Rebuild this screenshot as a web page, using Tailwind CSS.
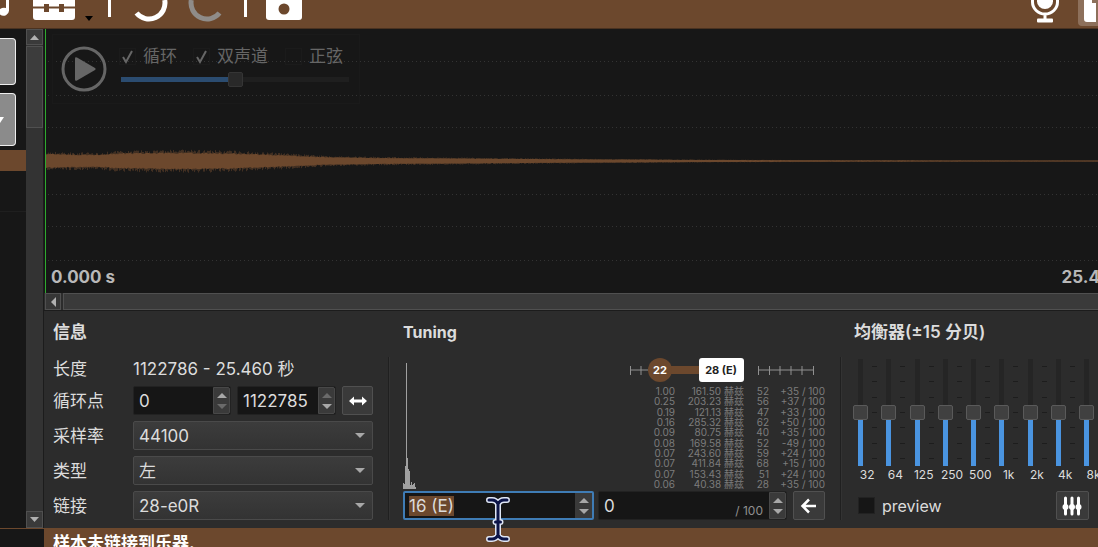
<!DOCTYPE html>
<html lang="zh-CN">
<head>
<meta charset="utf-8">
<title>样本编辑器</title>
<meta name="viewport" content="width=device-width, initial-scale=1">
<script src="https://cdn.jsdelivr.net/npm/@tailwindcss/browser@4"></script>
</head>
<body class="flex h-screen flex-col overflow-hidden bg-[#171717] font-['Inter','Noto_Sans_CJK_SC',sans-serif] text-[17px] leading-5 text-[#dcdcdc]">

<header class="flex h-[29px] shrink-0 items-start border-b border-[#4a3220] bg-[#6c482d] text-white">
  <button type="button" aria-label="乐器"><svg class="block" width="9" height="28" viewBox="0 0 9 28"><path d="M6 0h3v10a5.500 5.500 0 0 1-9 4.500V9q3-2 6-1z" fill="currentColor"/></svg></button>
  <button type="button" aria-label="工具箱" class="ml-6"><svg class="block" width="42" height="28" viewBox="0 0 42 28"><path d="M0 0h42v6.500H31V4h-5v2.500H16V4h-5v2.500H0zM0 8.500h11V12h5V8.500h10V12h5V8.500h11V17a3 3 0 0 1-3 3H3a3 3 0 0 1-3-3z" fill="currentColor"/></svg></button>
  <button type="button" aria-label="更多工具" class="ml-[9px] text-black"><svg class="block" width="10" height="28" viewBox="0 0 10 28"><path d="M1 16h8l-4 5z" fill="currentColor"/></svg></button>
  <div class="ml-[14px] h-[17px] w-[3px] bg-white"></div>
  <button type="button" aria-label="撤销" class="ml-[22px]"><svg class="block" width="36" height="28" viewBox="0 0 36 28"><path d="M3.500 13A16 16 0 0 0 31.700 0" fill="none" stroke="currentColor" stroke-width="5"/></svg></button>
  <button type="button" aria-label="重做" class="ml-[18px] text-[#8f8c89]"><svg class="block" width="36" height="28" viewBox="0 0 36 28"><path d="M4.300 0A16 16 0 0 0 32.500 13" fill="none" stroke="currentColor" stroke-width="5"/></svg></button>
  <div class="ml-[21px] h-[17px] w-[3px] bg-white"></div>
  <button type="button" aria-label="保存" class="ml-[19px]"><svg class="block" width="36" height="28" viewBox="0 0 36 28"><path d="M0 0h36v17a3 3 0 0 1-3 3H3a3 3 0 0 1-3-3z" fill="currentColor"/><circle cx="18" cy="9" r="5.500" fill="#6c482d"/></svg></button>
  <button type="button" aria-label="录音" class="ml-auto"><svg class="block" width="30" height="28" viewBox="0 0 30 28"><path d="M7 0v1.500a8 7.500 0 0 0 16 0V0z" fill="currentColor"/><path d="M2.500 0v2a12.500 12 0 0 0 25 0V0M15 14v6" fill="none" stroke="currentColor" stroke-width="3"/><rect x="7" y="18.500" width="16" height="4" rx="1" fill="currentColor"/></svg></button>
  <button type="button" aria-label="文件" class="ml-[18px] h-[26px] w-5 rounded-bl bg-[#8d705b]"><svg class="block" width="20" height="26" viewBox="0 0 20 26"><path d="M6 0h8v3h4v19H9a3 3 0 0 1-3-3z" fill="currentColor"/></svg></button>
</header>

<div class="flex min-h-0 flex-1">
  <aside class="flex w-[26px] shrink-0 flex-col">
    <button type="button" aria-label="样本" class="mt-[9px] h-[47px] w-4 rounded-r border border-l-0 border-[#eeeeee] bg-[#8b8b8b]"></button>
    <button type="button" aria-label="展开" class="mt-2 flex h-[53px] w-4 items-center rounded-r border border-l-0 border-[#eeeeee] bg-[#8b8b8b]"><svg width="5" height="8" viewBox="0 0 5 8"><path d="M0 1h4L0 7z" fill="#fff"/></svg></button>
    <div class="mt-1 h-[21px] bg-[#6c482d]"></div>
    <div class="mt-10 h-px bg-[#1f1f1f]"></div>
  </aside>

  <div class="flex w-[18px] shrink-0 flex-col border-r border-[#1c1c1c] bg-[#333333]">
    <button type="button" aria-label="向上滚动" class="flex h-4 items-center justify-center border border-[#505050] bg-[#3a3a3a]"><svg width="9" height="5" viewBox="0 0 9 5"><path d="M0 5l4.500-5L9 5z" fill="#b0b0b0"/></svg></button>
    <div class="mt-px h-[82px] border border-[#505050] bg-[#3c3c3c]"></div>
    <button type="button" aria-label="向下滚动" class="mt-auto flex h-[17px] items-center justify-center border border-[#505050] bg-[#3a3a3a]"><svg width="9" height="5" viewBox="0 0 9 5"><path d="M0 0h9L4.500 5z" fill="#b0b0b0"/></svg></button>
  </div>

  <main class="flex min-w-0 flex-1 flex-col">
    <section aria-label="波形" class="relative ml-px flex min-h-0 flex-1 flex-col justify-end overflow-hidden border-l border-[#2eaa2e] bg-[#171717]">
      <svg class="absolute inset-0 h-full w-full" aria-hidden="true">
        <g stroke="#333333" stroke-width="1" stroke-dasharray="1 3">
          <line x1="2" x2="100%" y1="32.500" y2="32.500"/><line x1="2" x2="100%" y1="66.500" y2="66.500"/><line x1="2" x2="100%" y1="98.500" y2="98.500"/>
          <line x1="2" x2="100%" y1="165.500" y2="165.500"/><line x1="2" x2="100%" y1="197.500" y2="197.500"/><line x1="2" x2="100%" y1="231.500" y2="231.500"/>
        </g>
        <path id="haze" fill="none" stroke="#6c482d" stroke-opacity="0.5"/>
        <path id="body" fill="#6c482d"/>
      </svg>
      <div class="absolute left-[6px] top-[5px] flex h-[70px] w-[308px] items-start gap-[14px] border border-[#1a1a1a] pl-[8px] pt-[11px] text-[#666666]">
        <button type="button" aria-label="播放"><svg class="block" width="46" height="46" viewBox="0 0 46 46"><circle cx="23" cy="23" r="21" fill="none" stroke="currentColor" stroke-width="3"/><path d="M14 12.500q0-2 2-1l18 10.500q1.500 1 0 2L16 34.500q-2 1-2-1z" fill="currentColor"/></svg></button>
        <div class="flex flex-col">
          <div class="-ml-0.5 flex items-center">
            <label class="flex items-center gap-[7px]"><span class="grid"><input type="checkbox" checked class="peer col-start-1 row-start-1 size-[17px] appearance-none border border-[#1b1b1b]"><svg class="col-start-1 row-start-1 hidden peer-checked:block" width="17" height="17" viewBox="0 0 17 17"><path d="M4 9l3 5 6-11" fill="none" stroke="currentColor" stroke-width="2"/></svg></span>循环</label>
            <label class="ml-4 flex items-center gap-[7px]"><span class="grid"><input type="checkbox" checked class="peer col-start-1 row-start-1 size-[17px] appearance-none border border-[#1b1b1b]"><svg class="col-start-1 row-start-1 hidden peer-checked:block" width="17" height="17" viewBox="0 0 17 17"><path d="M4 9l3 5 6-11" fill="none" stroke="currentColor" stroke-width="2"/></svg></span>双声道</label>
            <label class="ml-[17px] flex items-center gap-[7px]"><input type="checkbox" class="size-[17px] appearance-none border border-[#1b1b1b]">正弦</label>
          </div>
          <input type="range" aria-label="音量" min="0" max="100" value="50" class="mt-[6px] h-[15px] w-[228px] appearance-none bg-[linear-gradient(to_right,#2b4c70_50%,#1f1f1f_50%)] bg-[length:100%_5px] bg-center bg-no-repeat [&::-webkit-slider-thumb]:size-[15px] [&::-webkit-slider-thumb]:appearance-none [&::-webkit-slider-thumb]:rounded-xs [&::-webkit-slider-thumb]:border [&::-webkit-slider-thumb]:border-[#353535] [&::-webkit-slider-thumb]:bg-[#292929]">
        </div>
      </div>
      <div class="relative -mr-[38px] flex justify-between pb-[6px] pl-[5px] font-bold text-[#b8b8b8]"><span>0.000 s</span><span>25.460 s</span></div>
    </section>

    <div class="flex h-[18px] shrink-0 gap-[2px] border-b border-[#1c1c1c] bg-[#2c2c2c] pl-px">
      <button type="button" aria-label="向左滚动" class="flex w-4 items-center justify-center border border-[#505050] bg-[#363636]"><svg width="5" height="10" viewBox="0 0 5 10"><path d="M5 0v10L0 5z" fill="#b0b0b0"/></svg></button>
      <div class="flex-1 border border-r-0 border-[#505050] bg-[#3a3a3a]"></div>
    </div>

    <div class="flex shrink-0 overflow-hidden bg-[#2c2c2c] pb-2 pl-[9px] pt-[10px]">
      <section class="flex w-80 shrink-0 flex-col">
        <h2 class="h-[22px] font-semibold leading-[22px]">信息</h2>
        <div class="mt-4 grid grid-cols-[80px_1fr] items-center gap-y-[6px]">
          <div class="h-[21px]">长度</div>
          <div class="h-[21px]">1122786 - 25.460 秒</div>
          <label for="loop-start">循环点</label>
          <div class="flex h-[29px] gap-[6px]">
            <div class="flex w-[98px] rounded-xs border border-[#222222] bg-[#161616]">
              <input id="loop-start" type="text" value="0" class="min-w-0 flex-1 bg-transparent pl-[5px] outline-none">
              <div class="flex w-[17px] flex-col rounded-r-xs border border-[#484848] bg-[#3a3a3a]">
                <button type="button" aria-label="增加" class="flex flex-1 items-end justify-center pb-[3px] text-[#a8a8a8]"><svg width="10" height="5" viewBox="0 0 10 5"><path d="M0 5l5-5 5 5z" fill="currentColor"/></svg></button>
                <button type="button" aria-label="减少" class="flex flex-1 items-start justify-center pt-[3px] text-[#6a6a6a]"><svg width="10" height="5" viewBox="0 0 10 5"><path d="M0 0h10L5 5z" fill="currentColor"/></svg></button>
              </div>
            </div>
            <div class="flex w-[99px] rounded-xs border border-[#222222] bg-[#161616]">
              <input aria-label="循环终点" type="text" value="1122785" class="min-w-0 flex-1 bg-transparent pl-[5px] outline-none">
              <div class="flex w-[17px] flex-col rounded-r-xs border border-[#484848] bg-[#3a3a3a]">
                <button type="button" aria-label="增加" class="flex flex-1 items-end justify-center pb-[3px] text-[#6a6a6a]"><svg width="10" height="5" viewBox="0 0 10 5"><path d="M0 5l5-5 5 5z" fill="currentColor"/></svg></button>
                <button type="button" aria-label="减少" class="flex flex-1 items-start justify-center pt-[3px] text-[#a8a8a8]"><svg width="10" height="5" viewBox="0 0 10 5"><path d="M0 0h10L5 5z" fill="currentColor"/></svg></button>
              </div>
            </div>
            <button type="button" aria-label="完整范围" class="flex flex-1 items-center justify-center rounded-xs border border-[#505050] bg-[#3a3a3a]"><svg width="18" height="10" viewBox="0 0 18 10"><path d="M0 5l5-4.500v3h8v-3L18 5l-5 4.500v-3H5v3z" fill="#fff"/></svg></button>
          </div>
          <label for="rate">采样率</label>
          <div class="grid items-center">
            <select id="rate" class="col-start-1 row-start-1 h-[29px] appearance-none rounded-xs border border-[#4a4a4a] bg-linear-to-b from-[#3c3c3c] to-[#333333] pl-[5px]"><option>44100</option></select>
            <svg class="pointer-events-none col-start-1 row-start-1 mr-2 justify-self-end" width="10" height="5" viewBox="0 0 10 5"><path d="M0 0h10L5 5z" fill="#a8a8a8"/></svg>
          </div>
          <label for="kind">类型</label>
          <div class="grid items-center">
            <select id="kind" class="col-start-1 row-start-1 h-[29px] appearance-none rounded-xs border border-[#4a4a4a] bg-linear-to-b from-[#3c3c3c] to-[#333333] pl-[5px]"><option>左</option></select>
            <svg class="pointer-events-none col-start-1 row-start-1 mr-2 justify-self-end" width="10" height="5" viewBox="0 0 10 5"><path d="M0 0h10L5 5z" fill="#a8a8a8"/></svg>
          </div>
          <label for="link">链接</label>
          <div class="grid items-center">
            <select id="link" class="col-start-1 row-start-1 h-[29px] appearance-none rounded-xs border border-[#4a4a4a] bg-linear-to-b from-[#3c3c3c] to-[#333333] pl-[5px]"><option>28-e0R</option></select>
            <svg class="pointer-events-none col-start-1 row-start-1 mr-2 justify-self-end" width="10" height="5" viewBox="0 0 10 5"><path d="M0 0h10L5 5z" fill="#a8a8a8"/></svg>
          </div>
        </div>
      </section>

      <div class="ml-[15px] mt-9 w-[2px] shrink-0 border-l border-r border-l-[#202020] border-r-[#333333]"></div>

      <section class="ml-[13px] flex w-[422px] shrink-0 flex-col">
        <h2 class="h-[22px] text-base font-bold leading-[22px]">Tuning</h2>
        <div class="mt-[15px] flex h-[131px] items-end justify-between">
          <svg width="18" height="126" viewBox="0 0 18 126" aria-label="频谱"><path d="M3.500 0v126" stroke="#a0a0a0"/><path d="M.5 126v-6M1.500 126v-5M2.500 126v-23M4.500 126V95M5.500 126v-20M6.500 126v-18M7.500 126v-4M8.500 126v-7M9.500 126v-4M10.500 126v-5M11.500 126v-6M12.500 126v-2" stroke="#a0a0a0"/></svg>
          <div class="w-[195px]">
            <svg class="block" width="184" height="24" viewBox="0 0 184 24" font-size="11" font-weight="700" text-anchor="middle">
              <path d="M.5 12H20M.5 8v9M11 8v9M128.500 12H183.500M128.500 8v9M139.500 8v9M150 8v9M161 8v9M172 8v9M183.500 8v9" fill="none" stroke="#909090"/>
              <path d="M35 12h36" stroke="#6c482d" stroke-width="8"/>
              <circle cx="30" cy="12" r="12" fill="#6c482d"/>
              <rect x="69" width="45" height="24" rx="3" fill="#fff"/>
              <text x="30" y="16" fill="#fff">22</text>
              <text x="91" y="16" fill="#222">28 (E)</text>
            </svg>
            <table class="mt-[4px] h-[103px] w-full table-fixed text-right text-[10px] leading-[10px] text-[#7c7c7c]">
              <colgroup><col class="w-[45px]"><col class="w-[69px]"><col class="w-[25px]"><col></colgroup>
              <tbody>
                <tr><td>1.00</td><td>161.50 赫兹</td><td>52</td><td>+35 / 100</td></tr>
                <tr><td>0.25</td><td>203.23 赫兹</td><td>56</td><td>+37 / 100</td></tr>
                <tr><td>0.19</td><td>121.13 赫兹</td><td>47</td><td>+33 / 100</td></tr>
                <tr><td>0.16</td><td>285.32 赫兹</td><td>62</td><td>+50 / 100</td></tr>
                <tr><td>0.09</td><td>80.75 赫兹</td><td>40</td><td>+35 / 100</td></tr>
                <tr><td>0.08</td><td>169.58 赫兹</td><td>52</td><td>-49 / 100</td></tr>
                <tr><td>0.07</td><td>243.60 赫兹</td><td>59</td><td>+24 / 100</td></tr>
                <tr><td>0.07</td><td>411.84 赫兹</td><td>68</td><td>+15 / 100</td></tr>
                <tr><td>0.07</td><td>153.43 赫兹</td><td>51</td><td>+24 / 100</td></tr>
                <tr><td>0.06</td><td>40.38 赫兹</td><td>28</td><td>+35 / 100</td></tr>
              </tbody>
            </table>
          </div>
        </div>
        <div class="mt-[2px] flex h-[29px]">
          <div class="flex w-[191px] rounded-xs border-2 border-[#3f7cb5] bg-[#161616]">
            <input id="root-key" aria-label="基准音" type="text" value="16 (E)" class="min-w-0 flex-1 bg-transparent pl-1 outline-none selection:bg-[#6c482d] selection:text-[#dcdcdc]">
            <div class="flex w-[17px] flex-col bg-[#3a3a3a] text-[#a8a8a8]">
              <button type="button" aria-label="增加" class="flex flex-1 items-end justify-center pb-[3px]"><svg width="10" height="5" viewBox="0 0 10 5"><path d="M0 5l5-5 5 5z" fill="currentColor"/></svg></button>
              <button type="button" aria-label="减少" class="flex flex-1 items-start justify-center pt-[3px]"><svg width="10" height="5" viewBox="0 0 10 5"><path d="M0 0h10L5 5z" fill="currentColor"/></svg></button>
            </div>
          </div>
          <div class="ml-1 flex w-[189px] rounded-xs border border-[#222222] bg-[#161616]">
            <input id="cents" type="text" value="0" class="min-w-0 flex-1 bg-transparent pl-[5px] outline-none">
            <label for="cents" class="self-end pr-[6px] text-xs leading-4 text-[#909090]">/ 100</label>
            <div class="flex w-[17px] flex-col rounded-r-xs border border-[#484848] bg-[#3a3a3a] text-[#a8a8a8]">
              <button type="button" aria-label="增加" class="flex flex-1 items-end justify-center pb-[3px]"><svg width="10" height="5" viewBox="0 0 10 5"><path d="M0 5l5-5 5 5z" fill="currentColor"/></svg></button>
              <button type="button" aria-label="减少" class="flex flex-1 items-start justify-center pt-[3px]"><svg width="10" height="5" viewBox="0 0 10 5"><path d="M0 0h10L5 5z" fill="currentColor"/></svg></button>
            </div>
          </div>
          <button type="button" aria-label="应用调音" class="ml-[6px] flex flex-1 items-center justify-center rounded-xs border border-[#505050] bg-[#3a3a3a]"><svg width="18" height="16" viewBox="0 0 18 16"><path d="M16 8H3M9 1.500L2.500 8 9 14.500" fill="none" stroke="#fff" stroke-width="2.500"/></svg></button>
        </div>
      </section>

      <div class="ml-[15px] mt-9 w-[2px] shrink-0 border-l border-r border-l-[#202020] border-r-[#333333]"></div>

      <section class="ml-[11px] flex w-[283px] shrink-0 flex-col">
        <h2 class="h-[22px] pl-px font-semibold leading-[22px]">均衡器(±15 分贝)</h2>
        <div id="eq" class="mt-4 grid grid-cols-10"></div>
        <div class="mt-auto flex h-[29px] items-center">
          <label class="flex items-center gap-[7px] pl-[5px] text-base"><input type="checkbox" class="size-[17px] appearance-none border border-[#222222] bg-[#161616]">preview</label>
          <button type="button" aria-label="均衡器预设" class="ml-[114px] flex h-[29px] w-[33px] items-center justify-center rounded-xs border border-[#505050] bg-[#3a3a3a]"><svg width="20" height="20" viewBox="0 0 20 20"><path d="M3.500 2v16M10 2v16M16.500 2v16" stroke="#fff" stroke-width="3" stroke-linecap="round"/><g fill="#fff"><circle cx="3.500" cy="11" r="3"/><circle cx="10" cy="11" r="3"/><circle cx="16.500" cy="11" r="3"/></g></svg></button>
        </div>
      </section>
    </div>
  </main>
</div>

<footer class="flex h-[19px] shrink-0">
  <div class="w-11 border-t border-[#6c482d] bg-[#171717]"></div>
  <p class="flex-1 overflow-hidden bg-[#6c482d] pl-[9px] pt-[4px] font-bold leading-[22px] text-white">样本未链接到乐器.</p>
</footer>

<!-- text pointer floating above the root key box -->
<svg class="pointer-events-none absolute left-[486px] top-[496px]" width="24" height="47" viewBox="0 0 24 47" fill="none" stroke-linecap="round" stroke-linejoin="round">
  <path d="M3 4h3q4 0 6 4 2-4 6-4h3M3 43h3q4 0 6-4 2 4 6 4h3M12 8v31M9.500 26h5" stroke="#dfe6f5" stroke-width="6"/>
  <path d="M3 4h3q4 0 6 4 2-4 6-4h3M3 43h3q4 0 6-4 2 4 6 4h3M12 8v31M9.500 26h5" stroke="#0c1448" stroke-width="3"/>
</svg>

<script>
(() => {
  // equaliser bands
  const bands = ['32', '64', '125', '250', '500', '1k', '2k', '4k', '8k', '16k'];
  document.getElementById('eq').innerHTML = bands.map((b, i) => `
    <div class="flex flex-col">
      <div class="flex gap-[4px]">
        <input id="band${i}" type="range" min="-15" max="15" value="0" class="h-[107px] w-[15px] appearance-none bg-[linear-gradient(to_bottom,#252525_50%,#4a94e0_50%)] bg-[length:5px_100%] bg-center bg-no-repeat [direction:rtl] [writing-mode:vertical-lr] [&::-webkit-slider-thumb]:size-[15px] [&::-webkit-slider-thumb]:appearance-none [&::-webkit-slider-thumb]:rounded-xs [&::-webkit-slider-thumb]:border [&::-webkit-slider-thumb]:border-[#5a5a5a] [&::-webkit-slider-thumb]:bg-[#404040]">
        <div class="flex h-[107px] w-[5px] flex-col justify-between py-[7px]">${'<i class="block h-px bg-[#1d1d1d]"></i>'.repeat(7)}</div>
      </div>
      <label for="band${i}" class="mt-px h-4 text-center text-xs leading-4">${b}</label>
    </div>`).join('');

  // waveform: a decaying envelope with ragged edges around the zero line
  const env = [[0, 9], [50, 8], [75, 10], [130, 11], [190, 10], [240, 7.5], [280, 5], [330, 4], [450, 3], [560, 2], [680, 1.3], [800, 0.9], [1100, 0.7], [4000, 0.7]];
  const level = x => {
    let k = 1;
    while (env[k][0] < x) k++;
    const [x0, a] = env[k - 1], [x1, b] = env[k];
    return a + (b - a) * (x - x0) / (x1 - x0);
  };
  let seed = 7;
  const rnd = () => (seed = (seed * 16807) % 2147483647) / 2147483647;
  const mid = 132, end = innerWidth;
  let upper = '', lower = '', haze = '';
  for (let x = 0; x < end; x++) {
    const v = level(x), t = v * (0.65 + rnd() * 0.15), l = v * (0.65 + rnd() * 0.15);
    upper += `${x ? 'L' : 'M'}${x} ${(mid - t).toFixed(1)}`;
    lower = `L${x} ${(mid + l).toFixed(1)}` + lower;
    haze += `M${x}.5 ${(mid - v * (0.7 + rnd() * 0.35)).toFixed(1)}V${(mid + v * (0.7 + rnd() * 0.4)).toFixed(1)}`;
  }
  document.getElementById('body').setAttribute('d', upper + lower + 'Z');
  document.getElementById('haze').setAttribute('d', haze);

  const key = document.getElementById('root-key');
  key.focus();
  key.select();
})();
</script>
</body>
</html>
